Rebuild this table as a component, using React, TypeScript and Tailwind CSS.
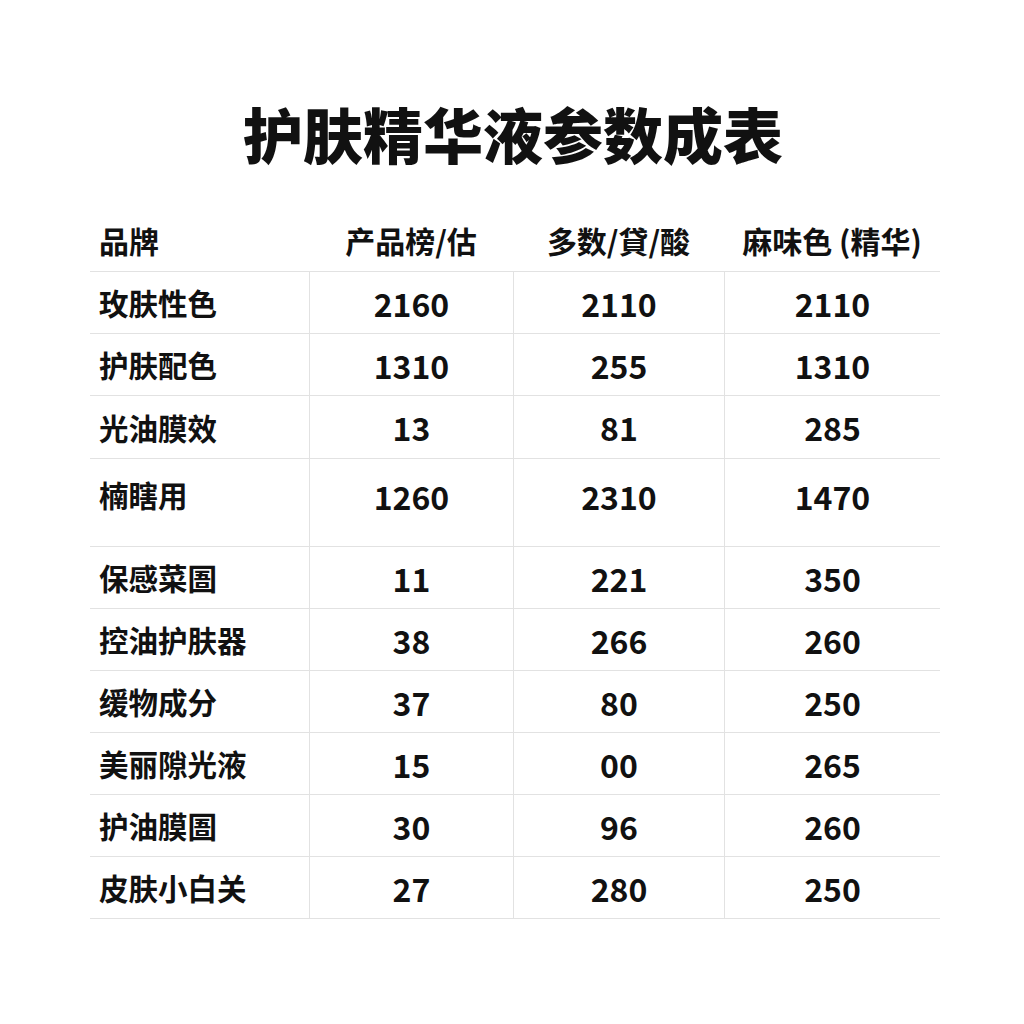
import React from "react";

type Row = { name: string; a: string; b: string; c: string; tall?: boolean };

const rows: Row[] = [
  { name: "玫肤性色", a: "2160", b: "2110", c: "2110" },
  { name: "护肤配色", a: "1310", b: "255", c: "1310" },
  { name: "光油膜效", a: "13", b: "81", c: "285" },
  { name: "楠瞎用", a: "1260", b: "2310", c: "1470", tall: true },
  { name: "保感菜圄", a: "11", b: "221", c: "350" },
  { name: "控油护肤器", a: "38", b: "266", c: "260" },
  { name: "缓物成分", a: "37", b: "80", c: "250" },
  { name: "美丽隙光液", a: "15", b: "00", c: "265" },
  { name: "护油膜圄", a: "30", b: "96", c: "260" },
  { name: "皮肤小白关", a: "27", b: "280", c: "250" },
];

export default function App() {
  return (
    <div
      className="w-[1024px] h-[1024px] bg-white text-[#111] overflow-hidden"
      style={{ fontFamily: '"Noto Sans CJK SC", "Noto Sans", sans-serif' }}
    >
      <div className="pt-[96px] text-center text-[60px] leading-[74px] font-black pl-[2px]">
        护肤精华液参数成表
      </div>
      <div className="mt-[40px] ml-[90px] w-[850px]">
        <div className="grid grid-cols-[219px_204px_211px_216px] h-[62px] border-b border-[#e2e2e2] items-center text-[30px] font-bold">
          <div className="pl-[9px]">品牌</div>
          <div className="text-center">产品榜/估</div>
          <div className="text-center">多数/貸/酸</div>
          <div className="text-center">麻味色 (精华)</div>
        </div>
        {rows.map((r, i) => {
          const align = r.tall ? "items-start pt-[13px]" : "items-center";
          return (
            <div
              key={i}
              className={
                "grid grid-cols-[219px_204px_211px_216px] border-b border-[#e2e2e2] font-bold " +
                (r.tall ? "h-[88px]" : i === 2 ? "h-[63px]" : "h-[62px]")
              }
            >
              <div className={"pl-[9px] flex text-[29.5px] " + align}>{r.name}</div>
              <div className={"border-l border-[#e2e2e2] flex justify-center text-[32px] " + align}>{r.a}</div>
              <div className={"border-l border-[#e2e2e2] flex justify-center text-[32px] " + align}>{r.b}</div>
              <div className={"border-l border-[#e2e2e2] flex justify-center text-[32px] " + align}>{r.c}</div>
            </div>
          );
        })}
      </div>
    </div>
  );
}
